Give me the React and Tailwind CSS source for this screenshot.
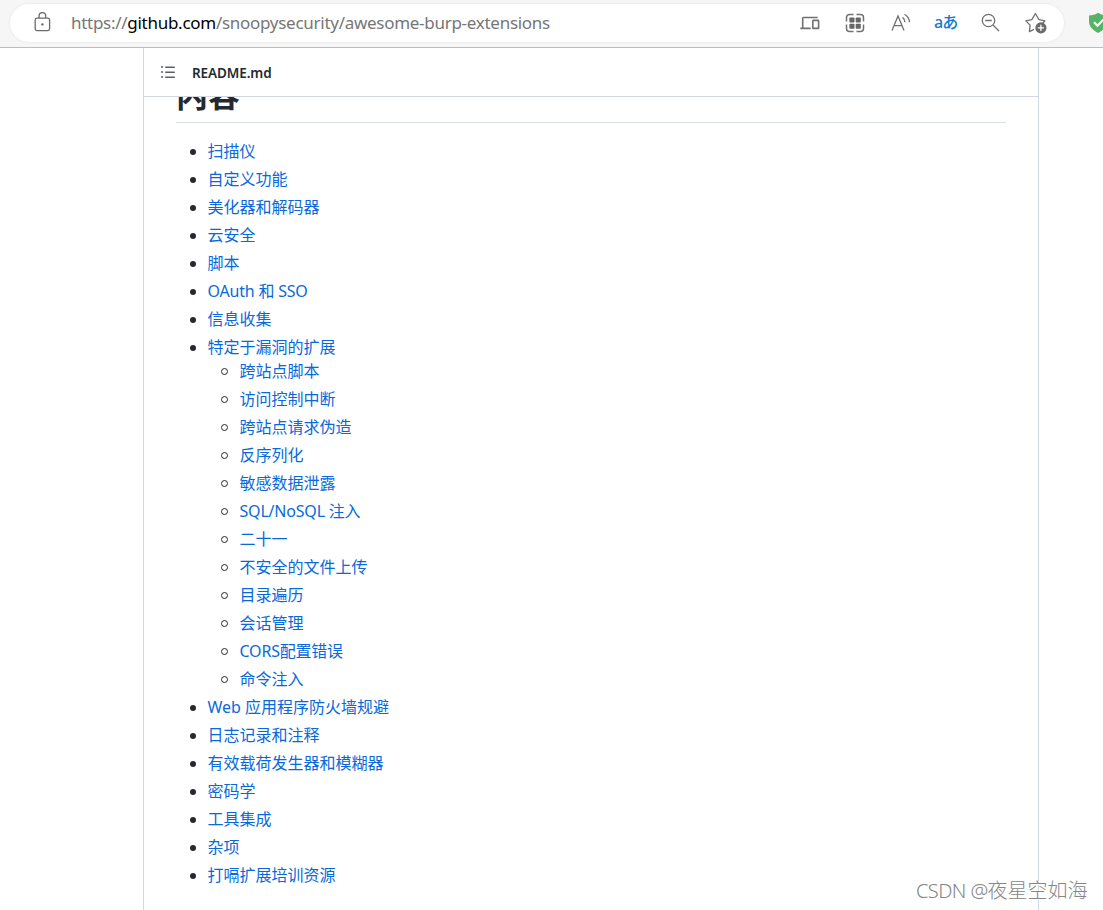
import React from "react";

const contents = [
  { label: "扫描仪" },
  { label: "自定义功能" },
  { label: "美化器和解码器" },
  { label: "云安全" },
  { label: "脚本" },
  { label: "OAuth 和 SSO", tight: true },
  { label: "信息收集" },
  {
    label: "特定于漏洞的扩展",
    children: [
      { label: "跨站点脚本" },
      { label: "访问控制中断" },
      { label: "跨站点请求伪造" },
      { label: "反序列化" },
      { label: "敏感数据泄露" },
      { label: "SQL/NoSQL 注入", tight: true },
      { label: "二十一" },
      { label: "不安全的文件上传" },
      { label: "目录遍历" },
      { label: "会话管理" },
      { label: "CORS配置错误", tight: true },
      { label: "命令注入" },
    ],
  },
  { label: "Web 应用程序防火墙规避" },
  { label: "日志记录和注释" },
  { label: "有效载荷发生器和模糊器" },
  { label: "密码学" },
  { label: "工具集成" },
  { label: "杂项" },
  { label: "打嗝扩展培训资源" },
];

const LockIcon = () => (
  <svg width="18" height="20" viewBox="0 0 18 20" fill="none" stroke="#6b6b6b" strokeWidth="1.3">
    <rect x="1.2" y="6.2" width="14.4" height="12.4" rx="1.8" />
    <path d="M5.1 6V3.9a3.3 3.3 0 0 1 6.6 0V6" />
    <circle cx="8.4" cy="12.4" r="1.2" fill="#6b6b6b" stroke="none" />
  </svg>
);

const DevicesIcon = () => (
  <svg width="20" height="20" viewBox="0 0 20 20" fill="none" stroke="#717171" strokeWidth="1.6">
    <path d="M2.7 14.5V5.3a.8.8 0 0 1 .8-.8h14.2M.3 15.4h10.4" />
    <rect x="12.8" y="7.4" width="5.8" height="8" rx=".5" />
  </svg>
);

const AppsIcon = () => (
  <svg width="20" height="20" viewBox="0 0 20 20" fill="none" stroke="#717171" strokeWidth="1.5">
    <path d="M1.5 8.5V4.500a3 3 0 0 1 3-3H8.500M11.500 1.500h4a3 3 0 0 1 3 3V8.500M18.500 11.500v4a3 3 0 0 1-3 3h-4M8.500 18.500H4.500a3 3 0 0 1-3-3v-4" />
    <g fill="#666" stroke="none">
      <rect x="4.4" y="4.4" width="5.1" height="5.1" rx=".8" />
      <rect x="10.7" y="4.4" width="5.1" height="5.1" rx=".8" />
      <rect x="4.4" y="10.7" width="5.1" height="5.1" rx=".8" />
      <rect x="10.7" y="10.7" width="5.1" height="5.1" rx=".8" />
    </g>
  </svg>
);

const ReadAloudIcon = () => (
  <svg width="20" height="20" viewBox="0 0 20 20" fill="none" stroke="#717171" strokeWidth="1.3">
    <path d="M1 17.5 7 3 13 17.5M3.2 12.6h7.6" />
    <path d="M11.5 4.2q2.3 1.7 2.4 5M13.5 1.2q4.800 2.800 5 8" />
  </svg>
);

const ZoomOutIcon = () => (
  <svg width="20" height="20" viewBox="0 0 20 20" fill="none" stroke="#717171" strokeWidth="1.3">
    <circle cx="7.5" cy="7.5" r="6.2" />
    <path d="M4.2 7.5h6.6M12 12l6 6" />
  </svg>
);

const FavoriteIcon = () => (
  <svg width="22" height="22" viewBox="0 0 22 22" fill="none" stroke="#717171" strokeWidth="1.3" strokeLinejoin="round">
    <path d="M9 17.4 4.4 19.6 5.1 13.1.8 8.9l6-1.2L10.4 1.5l3.5 6.2 6 1.1-2.2 2.4" />
    <circle cx="15.9" cy="15.9" r="5.6" fill="#6a6a6a" stroke="none" />
    <path d="M15.9 12.8V19M12.8 15.9H19" stroke="#fff" />
  </svg>
);

const ShieldIcon = () => (
  <svg width="20" height="22" viewBox="0 0 20 22" fill="none">
    <path d="M10 .8c2.6 1.8 5.4 2.7 9 2.7v5.8c0 5.3-3.4 8.7-9 11.7C4.4 18 1 14.6 1 9.3V3.5C4.6 3.5 7.4 2.6 10 .8Z" fill="#58b368" />
    <path d="m6 10.2 3.5 3.5L15.5 7.5" stroke="#fff" strokeWidth="2" />
  </svg>
);

const ListIcon = () => (
  <svg width="16" height="16" viewBox="0 0 16 16" fill="#57606a">
    <path d="M2 4a1 1 0 1 0 0-2 1 1 0 0 0 0 2Zm3.75-1.5a.75.75 0 0 0 0 1.5h8.5a.75.75 0 0 0 0-1.5h-8.5Zm0 5a.75.75 0 0 0 0 1.5h8.5a.75.75 0 0 0 0-1.5h-8.5Zm0 5a.75.75 0 0 0 0 1.5h8.5a.75.75 0 0 0 0-1.5h-8.5ZM3 8a1 1 0 1 1-2 0 1 1 0 0 1 2 0Zm-1 6a1 1 0 1 0 0-2 1 1 0 0 0 0 2Z" />
  </svg>
);

const AddressBar = () => (
  <header className="h-12 bg-[#f6f6f6] border-b border-[#bdbdbd] flex items-center overflow-hidden">
    <div className="ml-2.5 -mt-px h-[38px] w-[1054px] shrink-0 rounded-full bg-white shadow-[0_0_3px_rgba(0,0,0,0.08)] flex items-center justify-between">
      <div className="flex items-center pl-6 -mt-0.5">
        <LockIcon />
        <span className="ml-[19px] pt-px text-[17px] leading-6 tracking-[-0.28px] text-[#767676] whitespace-nowrap">
          https://<span className="text-black">github.com</span>/snoopysecurity/awesome-burp-extensions
        </span>
      </div>
      <div className="flex items-center pr-[17px] -mt-px">
        <DevicesIcon />
        <span className="w-[25px]" />
        <AppsIcon />
        <span className="w-[26px]" />
        <ReadAloudIcon />
        <span className="ml-[23px] -mt-0.5 w-[24px] text-[16px] leading-5 font-medium tracking-[-1px] text-[#0f7bd4] whitespace-nowrap">aあ</span>
        <span className="w-[23px]" />
        <ZoomOutIcon />
        <span className="w-[24px]" />
        <FavoriteIcon />
      </div>
    </div>
    <div className="ml-6 shrink-0 -mt-0.5">
      <ShieldIcon />
    </div>
  </header>
);

const ContentLink = ({ item }) => (
  <a
    href="#"
    className={`block h-6 -ml-[0.5px] leading-6 text-[#0969da] whitespace-nowrap ${item.tight ? "tracking-[-0.2px]" : "tracking-normal"}`}
  >
    {item.label}
  </a>
);

const TableOfContents = () => (
  <ul className="mt-4 pl-8 flex flex-col gap-1 text-base">
    {contents.map((item) => (
      <li key={item.label} className="relative">
        <span className="absolute left-[-18px] top-[10px] size-[6px] rounded-full bg-[#24292f]" />
        <ContentLink item={item} />
        {item.children && (
          <ul className="pl-8 flex flex-col gap-1">
            {item.children.map((child) => (
              <li key={child.label} className="relative">
                <span className="absolute left-[-19px] top-[9px] size-[7px] rounded-full border border-[#24292f]" />
                <ContentLink item={child} />
              </li>
            ))}
          </ul>
        )}
      </li>
    ))}
  </ul>
);

const App = () => {
  return (
    <div className="relative h-[910px] w-[1103px] overflow-hidden bg-white font-['Noto_Sans','Noto_Sans_CJK_SC',sans-serif]">
      <AddressBar />
      <main className="ml-[143px] h-[862px] w-[896px] border-x border-[#d0d7de]">
        <div className="h-[49px] border-b border-[#d0d7de] flex items-center gap-4 pl-4">
          <ListIcon />
          <span className="pt-0.5 text-[13.5px] leading-5 font-semibold tracking-[-0.1px] text-[#24292f]">README.md</span>
        </div>
        <article className="px-8">
          {/* heading is partly scrolled under the file bar */}
          <div className="h-[26px] overflow-hidden border-b border-[#d8dee4]">
            <h1 className="-mt-[22px] text-[32px] leading-10 font-bold text-[#24292f]">内容</h1>
          </div>
          <TableOfContents />
        </article>
      </main>
      <div className="absolute left-[916px] top-[877px] text-[20px] leading-7 font-light text-[#858585] whitespace-nowrap [text-shadow:1px_1px_0_#fff]">
        <span className="tracking-[-0.6px]">CSDN @</span>夜星空如海
      </div>
    </div>
  );
};

export default App;
